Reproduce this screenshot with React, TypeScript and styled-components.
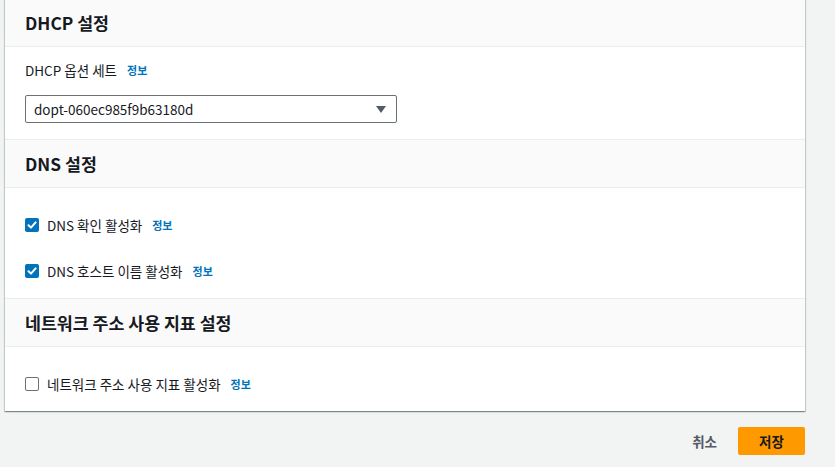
import React from "react";
import styled, { createGlobalStyle } from "styled-components";

const Global = createGlobalStyle`
  html, body { margin: 0; padding: 0; background: #f2f3f3; }
  body {
    font-family: "Noto Sans CJK KR", "Noto Sans", sans-serif;
    color: #16191f;
    -webkit-font-smoothing: antialiased;
  }
`;

const Page = styled.div`
  width: 835px;
  height: 467px;
  overflow: hidden;
  background: #f2f3f3;
`;

const Panel = styled.div`
  margin: -2px 30px 0 5px;
  background: #fff;
  box-shadow: 0 1px 1px 0 rgba(0, 28, 36, 0.3), 1px 1px 1px 0 rgba(0, 28, 36, 0.15),
    -1px 1px 1px 0 rgba(0, 28, 36, 0.15);
`;

const Section = styled.section`
  border-top: 1px solid #eaeded;
`;

const Header = styled.div`
  height: 48px;
  box-sizing: border-box;
  display: flex;
  align-items: center;
  padding: 0 20px;
  background: #fafafa;
  border-bottom: 1px solid #eaeded;
`;

const Title = styled.h2`
  margin: 0;
  font-size: 17.3px;
  line-height: 22px;
  font-weight: 700;
  color: #16191f;
`;

const Body = styled.div<{ $top: number; $bottom: number; $gap?: number }>`
  display: flex;
  flex-direction: column;
  gap: ${(p) => p.$gap ?? 0}px;
  padding: ${(p) => p.$top}px 20px ${(p) => p.$bottom}px;
`;

const LabelRow = styled.div`
  display: flex;
  align-items: center;
  height: 18px;
  margin-bottom: 16px;
`;

const Label = styled.span`
  font-size: 13.5px;
  line-height: 18px;
  color: #16191f;
`;

const Info = styled.a`
  font-size: 11px;
  font-weight: 700;
  color: #0073bb;
  text-decoration: none;
  margin-left: 10px;
  line-height: 18px;
`;

const Select = styled.div`
  width: 372px;
  height: 28px;
  box-sizing: border-box;
  border: 1px solid #687078;
  border-radius: 2px;
  display: flex;
  align-items: center;
  justify-content: space-between;
  padding: 0 10px 0 8px;
  font-size: 13.5px;
  color: #16191f;
`;

const CheckRow = styled.label`
  display: flex;
  align-items: center;
  height: 20px;
`;

const Box = styled.span<{ $checked?: boolean }>`
  width: 14px;
  height: 14px;
  box-sizing: border-box;
  border-radius: 2px;
  display: flex;
  align-items: center;
  justify-content: center;
  background: ${(p) => (p.$checked ? "#0073bb" : "#fff")};
  border: ${(p) => (p.$checked ? "none" : "1px solid #687078")};
  margin-right: 8px;
  flex: none;
`;

const Footer = styled.div`
  display: flex;
  justify-content: flex-end;
  align-items: center;
  gap: 1px;
  padding: 16px 30px 0 0;
`;

const CancelButton = styled.button`
  height: 28px;
  padding: 0 20px;
  border: none;
  background: transparent;
  font-family: inherit;
  font-size: 13.5px;
  font-weight: 700;
  color: #545b64;
`;

const PrimaryButton = styled.button`
  width: 67px;
  height: 28px;
  border: none;
  border-radius: 2px;
  background: #ff9900;
  font-family: inherit;
  font-size: 13.5px;
  font-weight: 700;
  color: #16191f;
`;

const Check = ({ checked, label }: { checked?: boolean; label: string }) => (
  <CheckRow>
    <Box $checked={checked}>
      {checked && (
        <svg width="10" height="10" viewBox="0 0 10 10">
          <path d="M1.5 5.2 L4 7.6 L8.6 2.4" fill="none" stroke="#fff" strokeWidth="2" strokeLinecap="round" strokeLinejoin="round" />
        </svg>
      )}
    </Box>
    <Label>{label}</Label>
    <Info href="#">정보</Info>
  </CheckRow>
);

export default function App() {
  return (
    <Page>
      <Global />
      <Panel>
        <Section>
          <Header>
            <Title>DHCP 설정</Title>
          </Header>
          <Body $top={14} $bottom={16}>
            <LabelRow>
              <Label>DHCP 옵션 세트</Label>
              <Info href="#">정보</Info>
            </LabelRow>
            <Select>
              <span>dopt-060ec985f9b63180d</span>
              <svg width="10" height="7" viewBox="0 0 10 7">
                <path d="M0 0 H10 L5 7 Z" fill="#545b64" />
              </svg>
            </Select>
          </Body>
        </Section>
        <Section>
          <Header>
            <Title>DNS 설정</Title>
          </Header>
          <Body $top={27} $bottom={17} $gap={26}>
            <Check checked label="DNS 확인 활성화" />
            <Check checked label="DNS 호스트 이름 활성화" />
          </Body>
        </Section>
        <Section>
          <Header>
            <Title>네트워크 주소 사용 지표 설정</Title>
          </Header>
          <Body $top={27} $bottom={17}>
            <Check label="네트워크 주소 사용 지표 활성화" />
          </Body>
        </Section>
      </Panel>
      <Footer>
        <CancelButton>취소</CancelButton>
        <PrimaryButton>저장</PrimaryButton>
      </Footer>
    </Page>
  );
}
